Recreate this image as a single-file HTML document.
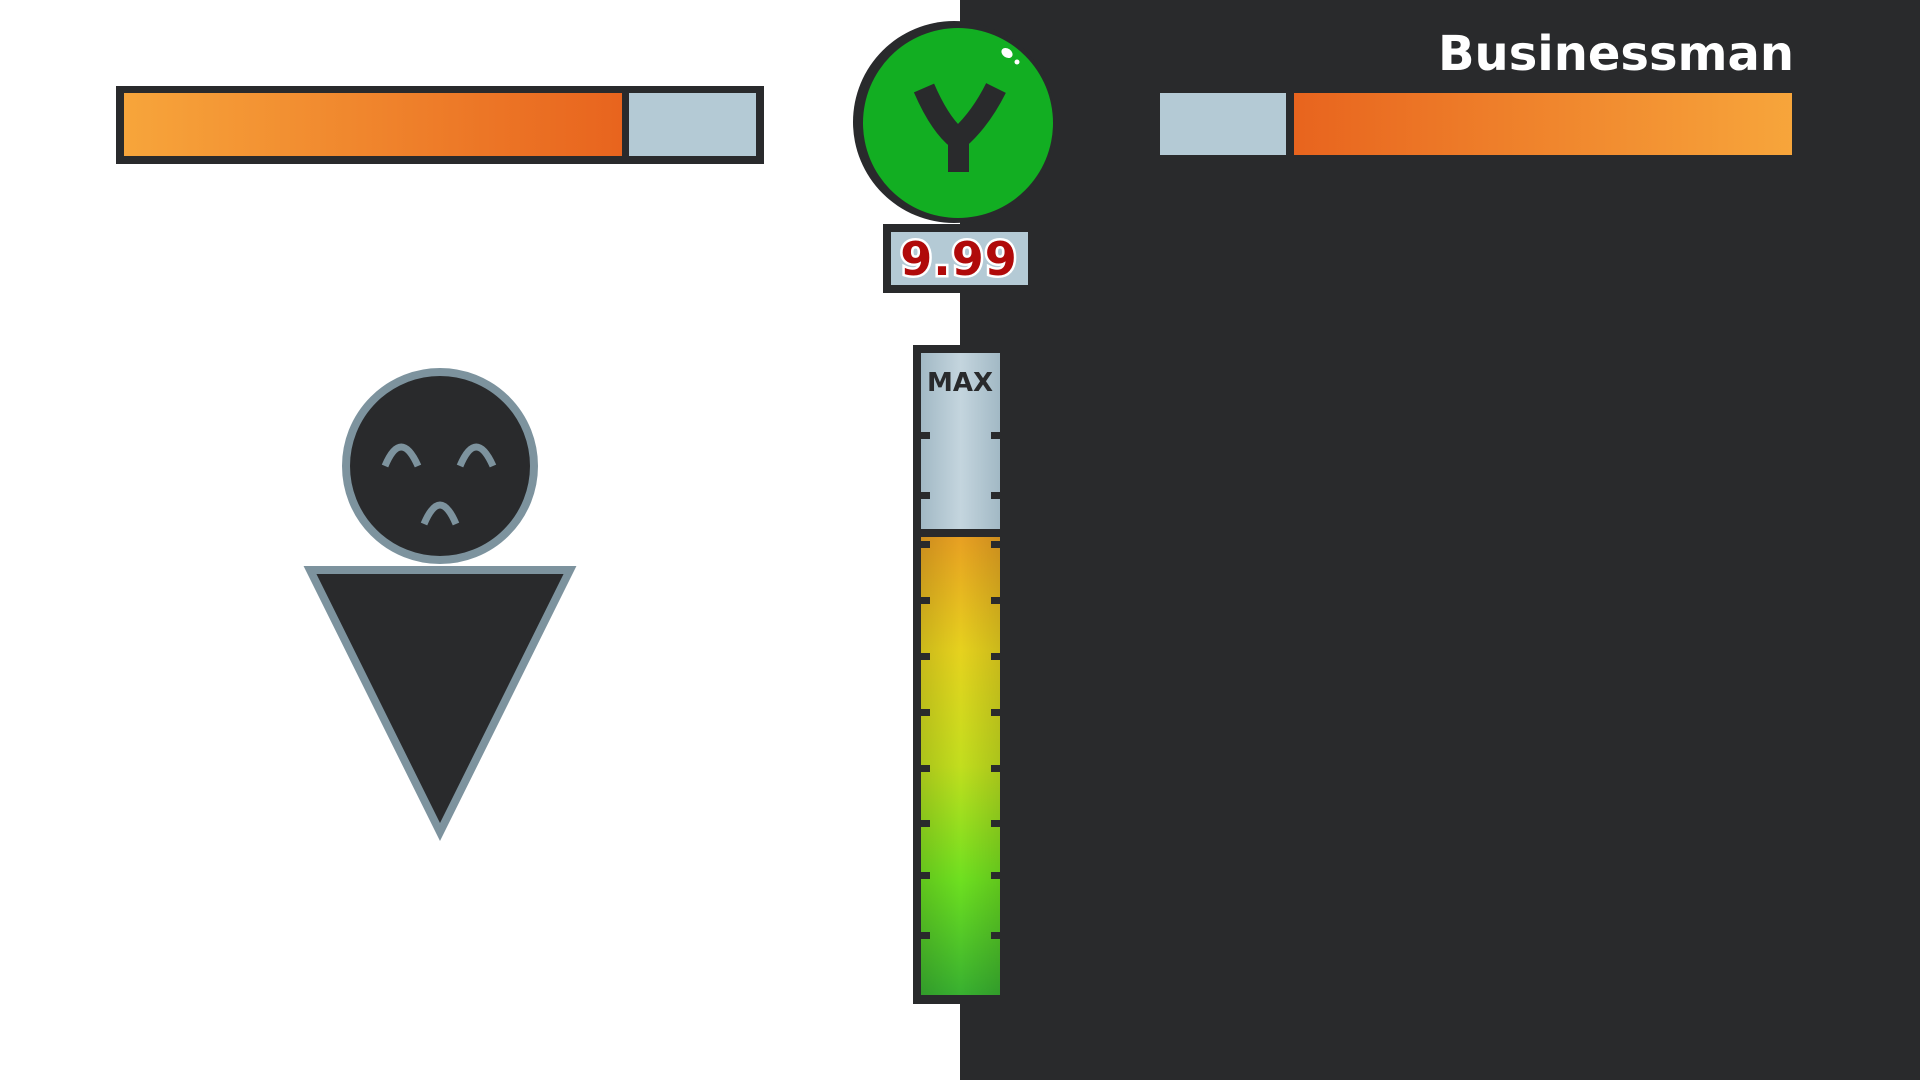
<!DOCTYPE html>
<html><head><meta charset="utf-8"><style>
html,body{margin:0;padding:0;width:1920px;height:1080px;overflow:hidden;background:#fff}
svg{display:block}
</style></head><body>
<svg width="1920" height="1080" xmlns="http://www.w3.org/2000/svg">
<defs>
<linearGradient id="orL" x1="0" x2="1"><stop offset="0" stop-color="#f7a53b"/><stop offset="1" stop-color="#e8641e"/></linearGradient>
<linearGradient id="orR" x1="0" x2="1"><stop offset="0" stop-color="#e8641e"/><stop offset="1" stop-color="#f7a53b"/></linearGradient>
<linearGradient id="gr" x1="0" x2="1"><stop offset="0" stop-color="#a2b9c5"/><stop offset="0.5" stop-color="#c4d5de"/><stop offset="1" stop-color="#a2b9c5"/></linearGradient>
<linearGradient id="mv" x1="0" y1="0" x2="0" y2="1"><stop offset="0" stop-color="#e8a022"/><stop offset="0.25" stop-color="#e6d21e"/><stop offset="0.5" stop-color="#c2de1e"/><stop offset="0.75" stop-color="#6ee020"/><stop offset="1" stop-color="#38b030"/></linearGradient>
<linearGradient id="mh" x1="0" x2="1"><stop offset="0" stop-color="#000" stop-opacity="0.12"/><stop offset="0.5" stop-color="#000" stop-opacity="0"/><stop offset="1" stop-color="#000" stop-opacity="0.12"/></linearGradient>
</defs>
<rect x="960" y="0" width="960" height="1080" fill="#292a2c"/>
<rect x="116" y="86" width="648" height="78" fill="#292a2c"/>
<rect x="124" y="93" width="498" height="63" fill="url(#orL)"/>
<rect x="629" y="93" width="127" height="63" fill="#b4cad5"/>
<rect x="1160" y="93" width="126" height="62" fill="#b4cad5"/>
<rect x="1294" y="93" width="498" height="62" fill="url(#orR)"/>
<text x="1438" y="70" textLength="356" lengthAdjust="spacingAndGlyphs" font-family="DejaVu Sans, sans-serif" font-weight="bold" font-size="48" fill="#fff">Businessman</text>
<circle cx="954" cy="122" r="101" fill="#292a2c"/>
<circle cx="958" cy="123" r="95" fill="#12ae22"/>
<path d="M924 88 Q940 125 958 139 Q980 120 996 88" fill="none" stroke="#292a2c" stroke-width="22"/>
<rect x="948" y="130" width="21" height="42" fill="#292a2c"/>
<ellipse cx="1007" cy="53" rx="6" ry="4.5" transform="rotate(35 1007 53)" fill="#fff"/>
<circle cx="1017" cy="62" r="2.5" fill="#fff"/>
<rect x="883" y="224" width="147" height="69" fill="#292a2c"/>
<rect x="891" y="232" width="137" height="53" fill="#b4cad5"/>
<text x="959" y="275" text-anchor="middle" font-family="DejaVu Sans, sans-serif" font-weight="bold" font-size="46" fill="#b00a0a" stroke="#fff" stroke-width="5" paint-order="stroke" letter-spacing="1">9.99</text>
<rect x="913" y="345" width="92" height="659" fill="#292a2c"/>
<rect x="921" y="353" width="79" height="176" fill="url(#gr)"/>
<rect x="921" y="537" width="79" height="458" fill="url(#mv)"/>
<rect x="921" y="537" width="79" height="458" fill="url(#mh)"/>
<text x="960" y="391" text-anchor="middle" font-family="DejaVu Sans, sans-serif" font-weight="bold" font-size="26" fill="#292a2c">MAX</text>
<g fill="#292a2c">
<rect x="921" y="432" width="9" height="7"/><rect x="991" y="432" width="9" height="7"/>
<rect x="921" y="492" width="9" height="7"/><rect x="991" y="492" width="9" height="7"/>
<rect x="921" y="541" width="9" height="7"/><rect x="991" y="541" width="9" height="7"/>
<rect x="921" y="597" width="9" height="7"/><rect x="991" y="597" width="9" height="7"/>
<rect x="921" y="653" width="9" height="7"/><rect x="991" y="653" width="9" height="7"/>
<rect x="921" y="709" width="9" height="7"/><rect x="991" y="709" width="9" height="7"/>
<rect x="921" y="765" width="9" height="7"/><rect x="991" y="765" width="9" height="7"/>
<rect x="921" y="820" width="9" height="7"/><rect x="991" y="820" width="9" height="7"/>
<rect x="921" y="872" width="9" height="7"/><rect x="991" y="872" width="9" height="7"/>
<rect x="921" y="932" width="9" height="7"/><rect x="991" y="932" width="9" height="7"/>
</g>
<polygon points="310,570 570,570 440,832" fill="#292a2c" stroke="#7d939e" stroke-width="8"/>
<circle cx="440" cy="466" r="94" fill="#292a2c" stroke="#7d939e" stroke-width="8"/>
<g fill="none" stroke="#7d939e" stroke-width="7">
<path d="M385 466 Q401 428 418 466"/>
<path d="M460 466 Q476 428 493 466"/>
<path d="M424 524 Q440 486 456 524"/>
</g>
</svg>
</body></html>
